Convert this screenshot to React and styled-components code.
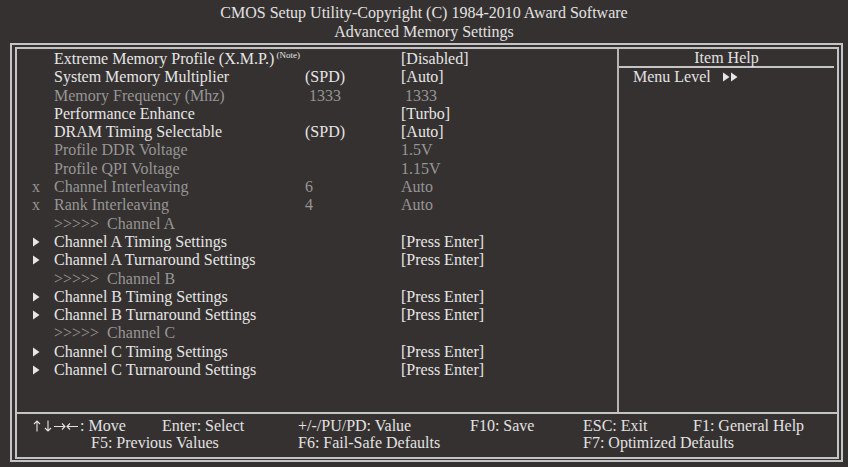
import React from "react";
import styled, { createGlobalStyle } from "styled-components";

const GlobalStyle = createGlobalStyle`
  html, body {
    margin: 0;
    padding: 0;
    background: #353130;
  }
  body {
    width: 848px;
    height: 467px;
    overflow: hidden;
    font-family: "Liberation Serif", "Times New Roman", serif;
    font-size: 16px;
    color: #e2e2e2;
  }
`;

const Screen = styled.div`
  width: 848px;
  height: 467px;
  background: #353130;
`;

const Title = styled.header`
  padding-top: 3px;
  height: 43px;
  box-sizing: border-box;
  text-align: center;
  line-height: 19px;
  color: #e2e2e2;
`;

const OuterFrame = styled.div`
  margin-left: 10px;
  width: 833px;
  height: 419px;
  box-sizing: border-box;
  border: 2px solid #c4c4c4;
  padding: 2px 2px 1px 3px;
`;

const InnerFrame = styled.div`
  height: 100%;
  box-sizing: border-box;
  border: 2px solid #c4c4c4;
  display: grid;
  grid-template-columns: 602px 1fr;
  grid-template-rows: 363px 1fr;
`;

const MainPanel = styled.section`
  border-right: 2px solid #b4b4b4;
  padding-top: 1px;
`;

const Row = styled.div`
  display: grid;
  grid-template-columns: 37px 251px 96px 1fr;
  height: 18.3px;
  line-height: 18.3px;
  white-space: pre;
  color: ${(p) => (p.$dim ? "#969696" : "#e6e6e6")};
`;

const Marker = styled.span`
  display: flex;
  align-items: center;
  padding-left: ${(p) => (p.$kind === "x" ? "15px" : "16px")};
`;

const Note = styled.sup`
  font-size: 9px;
  vertical-align: 6px;
  line-height: 0;
  margin-left: 2px;
`;

const HelpPanel = styled.aside`
  display: flex;
  flex-direction: column;
`;

const HelpHeader = styled.div`
  height: 17px;
  line-height: 17px;
  text-align: center;
  border-bottom: 2px solid #c4c4c4;
  margin-right: 3px;
`;

const HelpLine = styled.div`
  display: flex;
  align-items: center;
  gap: 12px;
  padding-left: 14px;
  line-height: 18px;
`;

const Footer = styled.footer`
  grid-column: 1 / -1;
  border-top: 2px solid #c4c4c4;
  padding: 3px 0 0 15px;
  display: grid;
  grid-template-columns: 130px 136px 172px 113px 110px 1fr;
  grid-auto-rows: 17px;
  line-height: 17px;
  white-space: pre;
`;

const Key = styled.span`
  grid-column: ${(p) => p.$col} / span ${(p) => p.$span || 1};
  padding-left: ${(p) => p.$indent || 0}px;
`;

const ArrowIcon = styled.svg`
  vertical-align: -1px;
  margin-right: 1px;
`;

const Triangle = ({ count = 1 }) => (
  <svg width={count * 8} height="10" viewBox={`0 0 ${count * 8} 10`}>
    {Array.from({ length: count }).map((_, i) => (
      <polygon key={i} points={`${i * 8},0.5 ${i * 8 + 6.5},5 ${i * 8},9.5`} fill="#e6e6e6" />
    ))}
  </svg>
);

const MoveArrows = () => (
  <ArrowIcon width="47" height="12" viewBox="0 0 47 12" fill="none" stroke="#e2e2e2" strokeWidth="1.1">
    <path d="M5 11.5V1M2 4l3-3 3 3" />
    <path d="M16 0.5V11M13 8l3 3 3-3" />
    <path d="M22 6.5h11M30 3.5l3 3-3 3" />
    <path d="M46 6.5H35M38 3.5l-3 3 3 3" />
  </ArrowIcon>
);

const rows = [
  { label: "Extreme Memory Profile (X.M.P.)", note: true, value: "[Disabled]" },
  { label: "System Memory Multiplier", mid: "(SPD)", value: "[Auto]" },
  { label: "Memory Frequency (Mhz)", mid: " 1333", value: " 1333", dim: true },
  { label: "Performance Enhance", value: "[Turbo]" },
  { label: "DRAM Timing Selectable", mid: "(SPD)", value: "[Auto]" },
  { label: "Profile DDR Voltage", value: "1.5V", dim: true },
  { label: "Profile QPI Voltage", value: "1.15V", dim: true },
  { marker: "x", label: "Channel Interleaving", mid: "6", value: "Auto", dim: true },
  { marker: "x", label: "Rank Interleaving", mid: "4", value: "Auto", dim: true },
  { label: ">>>>>  Channel A", dim: true },
  { marker: "sub", label: "Channel A Timing Settings", value: "[Press Enter]" },
  { marker: "sub", label: "Channel A Turnaround Settings", value: "[Press Enter]" },
  { label: ">>>>>  Channel B", dim: true },
  { marker: "sub", label: "Channel B Timing Settings", value: "[Press Enter]" },
  { marker: "sub", label: "Channel B Turnaround Settings", value: "[Press Enter]" },
  { label: ">>>>>  Channel C", dim: true },
  { marker: "sub", label: "Channel C Timing Settings", value: "[Press Enter]" },
  { marker: "sub", label: "Channel C Turnaround Settings", value: "[Press Enter]" },
];

const App = () => (
  <Screen>
    <GlobalStyle />
    <Title>
      <div>CMOS Setup Utility-Copyright (C) 1984-2010 Award Software</div>
      <div>Advanced Memory Settings</div>
    </Title>
    <OuterFrame>
      <InnerFrame>
        <MainPanel>
          {rows.map((r) => (
            <Row key={r.label} $dim={r.dim}>
              <Marker $kind={r.marker}>
                {r.marker === "x" ? "x" : r.marker === "sub" ? <Triangle /> : ""}
              </Marker>
              <span>
                {r.label}
                {r.note && <Note>(Note)</Note>}
              </span>
              <span>{r.mid || ""}</span>
              <span>{r.value || ""}</span>
            </Row>
          ))}
        </MainPanel>
        <HelpPanel>
          <HelpHeader>Item Help</HelpHeader>
          <HelpLine>
            Menu Level
            <Triangle count={2} />
          </HelpLine>
        </HelpPanel>
        <Footer>
          <Key $col={1}>
            <MoveArrows />: Move
          </Key>
          <Key $col={2}>Enter: Select</Key>
          <Key $col={3}>+/-/PU/PD: Value</Key>
          <Key $col={4}>F10: Save</Key>
          <Key $col={5}>ESC: Exit</Key>
          <Key $col={6}>F1: General Help</Key>
          <Key $col={1} $span={2} $indent={59}>F5: Previous Values</Key>
          <Key $col={3} $span={2}>F6: Fail-Safe Defaults</Key>
          <Key $col={5} $span={2}>F7: Optimized Defaults</Key>
        </Footer>
      </InnerFrame>
    </OuterFrame>
  </Screen>
);

export default App;
